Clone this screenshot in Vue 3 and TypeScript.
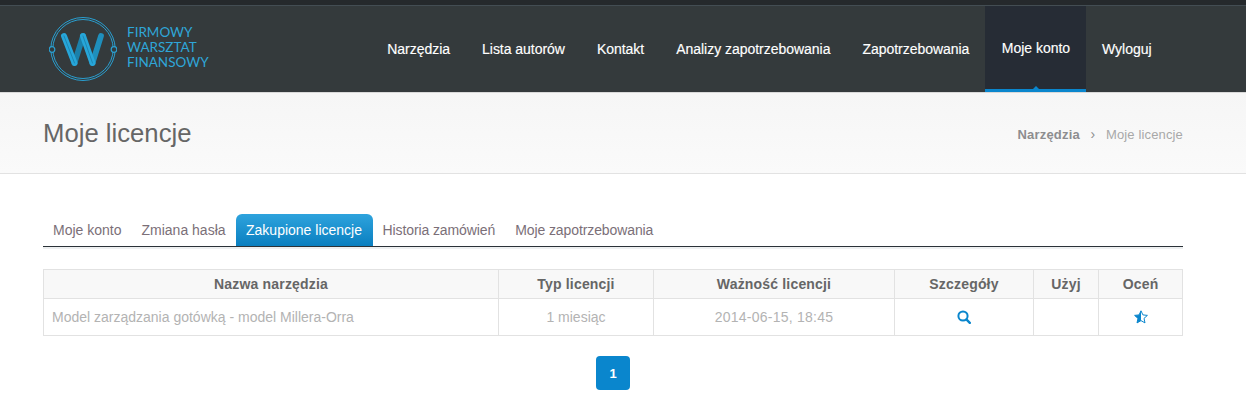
<script setup lang="ts">
const navItems = ['Narzędzia', 'Lista autorów', 'Kontakt', 'Analizy zapotrzebowania', 'Zapotrzebowania', 'Moje konto', 'Wyloguj']
const tabs = ['Moje konto', 'Zmiana hasła', 'Zakupione licencje', 'Historia zamówień', 'Moje zapotrzebowania']
</script>

<template>
  <div class="page">
    <div class="topstrip"></div>
    <header class="nav">
      <div class="brand">
        <svg class="logo" width="68" height="66" viewBox="0 0 68 66" fill="none">
          <ellipse cx="34" cy="33" rx="32.2" ry="31.5" stroke="#2a9fd0" stroke-width="1" />
          <ellipse cx="34" cy="33" rx="30.2" ry="29.5" stroke="#2a9fd0" stroke-width="1" />
          <circle cx="3" cy="33.5" r="2.8" fill="#343a3c" stroke="#2a9fd0" stroke-width="1.2" />
          <circle cx="65" cy="33.5" r="2.8" fill="#343a3c" stroke="#2a9fd0" stroke-width="1.2" />
          <path d="M25.5 47 L34 20" stroke="#1b80aa" stroke-width="5.8" stroke-linecap="round" />
          <path d="M43.5 47 L52 20" stroke="#1f8fbc" stroke-width="5.8" stroke-linecap="round" />
          <path d="M15 20 L25.5 47" stroke="#27a6d9" stroke-width="6" stroke-linecap="round" />
          <path d="M34 20 L43.5 47" stroke="#27a6d9" stroke-width="6" stroke-linecap="round" />
          <path d="M15 20 L25.5 47 M34 20 L43.5 47" stroke="#1a7ea8" stroke-width="0.8" stroke-linecap="round" />
        </svg>
        <div class="brand-text">FIRMOWY<br />WARSZTAT<br />FINANSOWY</div>
      </div>
      <nav class="menu">
        <a v-for="item in navItems" :key="item" class="menu-item" :class="{ active: item === 'Moje konto' }">{{ item }}</a>
      </nav>
    </header>

    <section class="crumbs">
      <h1>Moje licencje</h1>
      <div class="trail">
        <b>Narzędzia</b><span class="sep">›</span><span>Moje licencje</span>
      </div>
    </section>

    <main class="content">
      <div class="tabs">
        <a v-for="tab in tabs" :key="tab" class="tab" :class="{ on: tab === 'Zakupione licencje' }">{{ tab }}</a>
      </div>

      <table>
        <colgroup>
          <col class="c1" />
          <col class="c2" />
          <col class="c3" />
          <col class="c4" />
          <col class="c5" />
          <col class="c6" />
        </colgroup>
        <thead>
          <tr>
            <th>Nazwa narzędzia</th>
            <th>Typ licencji</th>
            <th>Ważność licencji</th>
            <th>Szczegóły</th>
            <th>Użyj</th>
            <th>Oceń</th>
          </tr>
        </thead>
        <tbody>
          <tr>
            <td class="left">Model zarządzania gotówką - model Millera-Orra</td>
            <td>1 miesiąc</td>
            <td class="date">2014-06-15, 18:45</td>
            <td>
              <svg class="ico" width="14" height="14" viewBox="0 0 14 14" fill="none">
                <circle cx="6" cy="6" r="4.6" stroke="#0a86cd" stroke-width="2" />
                <path d="M9.4 9.4 L12.8 12.8" stroke="#0a86cd" stroke-width="2.4" stroke-linecap="round" />
              </svg>
            </td>
            <td></td>
            <td>
              <svg class="ico star" width="14" height="14" viewBox="0 0 14 14">
                <path d="M7 .8 L8.9 4.9 L13.4 5.4 L10 8.4 L11 12.9 L7 10.6 L3 12.9 L4 8.4 L.6 5.4 L5.1 4.9 Z" fill="#fff" stroke="#0a86cd" stroke-width="1" stroke-linejoin="round" />
                <path d="M7 .8 L5.1 4.9 L.6 5.4 L4 8.4 L3 12.9 L7 10.6 Z" fill="#0a86cd" />
              </svg>
            </td>
          </tr>
        </tbody>
      </table>

      <div class="pager"><a class="page-btn">1</a></div>
    </main>
  </div>
</template>

<style scoped>
.page {
  width: 1246px;
  height: 415px;
  overflow: hidden;
  background: #fff;
  font-family: "Liberation Sans", Arial, sans-serif;
  color: #666;
}
.topstrip {
  height: 5px;
  background: #25292c;
  border-bottom: 1px solid #434d53;
}
.nav {
  height: 86px;
  background: #343a3c;
  border-bottom: 1px solid #d9d9d9;
  display: flex;
  justify-content: space-between;
  padding: 0 78.5px 0 49px;
}
.brand {
  display: flex;
  align-items: center;
  gap: 10px;
  padding-bottom: 2px;
}
.logo {
  margin-top: 1px;
}
.brand-text {
  font-family: Lato, sans-serif;
  font-size: 13.5px;
  line-height: 15px;
  color: #2fa6d8;
  margin-top: -1px;
}
.menu {
  display: flex;
}
.menu-item {
  display: flex;
  align-items: center;
  padding: 0 16px;
  height: 86px;
  box-sizing: border-box;
  font-size: 14px;
  letter-spacing: -0.03px;
  color: #fff;
  -webkit-text-stroke: 0.15px #fff;
  position: relative;
}
.menu-item.active {
  background: #262c35;
  border-bottom: 3px solid #0a86cd;
  padding-left: 16.5px;
}
.menu-item.active::after {
  content: "";
  position: absolute;
  left: 50%;
  bottom: 0;
  margin-left: -3px;
  border: 3px solid transparent;
  border-top: 0;
  border-bottom-color: #0a86cd;
}
.crumbs {
  height: 80px;
  background: linear-gradient(#f6f6f6, #fafafa);
  border-bottom: 1px solid #e2e2e2;
  display: flex;
  align-items: center;
  justify-content: space-between;
  padding: 0 63px 0 43px;
}
.crumbs h1 {
  margin: 0;
  font-size: 25.7px;
  font-weight: 400;
  color: #666;
}
.trail {
  font-size: 13px;
  letter-spacing: 0.15px;
  color: #a8a8a8;
  padding-top: 2px;
}
.trail b {
  color: #8d8d8f;
  letter-spacing: 0.2px;
}
.sep {
  display: inline-block;
  width: 26px;
  text-align: center;
  font-size: 14px;
  color: #8d8d8f;
}
.content {
  padding: 40px 63px 0 43px;
}
.tabs {
  display: flex;
  height: 32px;
  border-bottom: 1px solid #2b3238;
  box-shadow: 0 2px 0 #eef0f1;
}
.tab {
  display: flex;
  align-items: center;
  height: 32px;
  padding: 0 10px;
  font-size: 14px;
  color: #7b6f78;
}
.tab:nth-child(n + 4) {
  letter-spacing: -0.1px;
}
.tab.on {
  background: linear-gradient(#2ea3dd, #0a7fc0);
  color: #fff;
  border-radius: 6px 6px 0 0;
  padding: 0 10.5px;
}
table {
  width: 1139px;
  margin-top: 22px;
  border-collapse: collapse;
  table-layout: fixed;
  font-size: 14px;
}
.c1 {
  width: 455px;
}
.c2 {
  width: 155px;
}
.c3 {
  width: 241px;
}
.c4 {
  width: 139px;
}
.c5 {
  width: 65px;
}
.c6 {
  width: 84px;
}
th,
td {
  border: 1px solid #e2e2e2;
  text-align: center;
  padding: 0 8px;
}
th {
  height: 29px;
  box-sizing: border-box;
  background: #f8f8f8;
  font-size: 14px;
  letter-spacing: 0.18px;
  color: #666;
}
td {
  height: 37px;
  box-sizing: border-box;
  color: #b3b3b3;
}
td.left {
  text-align: left;
}
td.date {
  letter-spacing: 0.25px;
}
.ico {
  display: block;
  margin: 0 auto;
}
.pager {
  display: flex;
  justify-content: center;
  margin-top: 20px;
}
.page-btn {
  width: 34px;
  height: 34px;
  display: flex;
  align-items: center;
  justify-content: center;
  background: #0a86cd;
  border-radius: 4px;
  color: #fff;
  font-size: 13px;
  font-weight: 700;
}
</style>
